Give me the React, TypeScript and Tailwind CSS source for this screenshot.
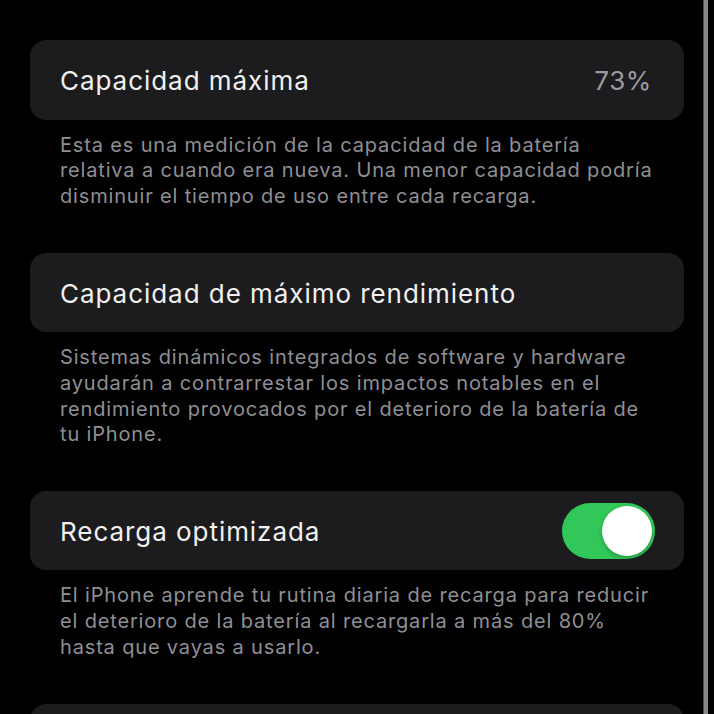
import React, { useState } from 'react';

const sans = { fontFamily: 'Inter, "Noto Sans", sans-serif' };

interface SectionProps {
  title: string;
  value?: string;
  toggle?: boolean;
  footer?: string[];
}

const Toggle: React.FC<{ on: boolean; onChange: (v: boolean) => void }> = ({ on, onChange }) => (
  <button
    onClick={() => onChange(!on)}
    className={`relative flex h-[56px] w-[93px] shrink-0 items-center rounded-full p-[3px] ${on ? 'justify-end bg-[#32c759]' : 'justify-start bg-[#39393d]'}`}
  >
    <span className="block h-[50px] w-[50px] rounded-full bg-white shadow-[0_2px_4px_rgba(0,0,0,0.25)]" />
  </button>
);

const Section: React.FC<SectionProps> = ({ title, value, toggle, footer }) => {
  const [on, setOn] = useState(true);
  return (
    <div className="mb-[43px]">
      <div className="flex h-[79.5px] items-center justify-between rounded-[16px] bg-[#1c1c1e] pl-[30px] pr-[29px]">
        <span className="pt-[3px] text-[26px] leading-none tracking-[0.95px] text-[#f0f0f0]">{title}</span>
        {value && <span className="mr-[3px] pt-[3px] text-[26px] leading-none tracking-[0.6px] text-[#9b9b9f]">{value}</span>}
        {toggle && <Toggle on={on} onChange={setOn} />}
      </div>
      {footer && (
        <div className="mt-[13px] pl-[30px] text-[20px] leading-[25.7px] tracking-[0.84px] text-[#8f8f94]">
          {footer.map((line, i) => (
            <div key={i} className="whitespace-nowrap">{line}</div>
          ))}
        </div>
      )}
    </div>
  );
};

export default function App() {
  return (
    <div className="flex h-[714px] w-[714px] overflow-hidden bg-black" style={sans}>
      <div className="flex-1 pl-[30px] pr-[19px] pt-[40px]">
        <Section
          title="Capacidad máxima"
          value="73%"
          footer={[
            'Esta es una medición de la capacidad de la batería',
            'relativa a cuando era nueva. Una menor capacidad podría',
            'disminuir el tiempo de uso entre cada recarga.',
          ]}
        />
        <Section
          title="Capacidad de máximo rendimiento"
          footer={[
            'Sistemas dinámicos integrados de software y hardware',
            'ayudarán a contrarrestar los impactos notables en el',
            'rendimiento provocados por el deterioro de la batería de',
            'tu iPhone.',
          ]}
        />
        <Section
          title="Recarga optimizada"
          toggle
          footer={[
            'El iPhone aprende tu rutina diaria de recarga para reducir',
            'el deterioro de la batería al recargarla a más del 80%',
            'hasta que vayas a usarlo.',
          ]}
        />
        <div className="h-[80px] rounded-[16px] bg-[#1c1c1e]" />
      </div>
      <div className="w-[5px] border-l border-[#505050] bg-[#8a8a8a]" />
      <div className="w-[6px]" />
    </div>
  );
}
